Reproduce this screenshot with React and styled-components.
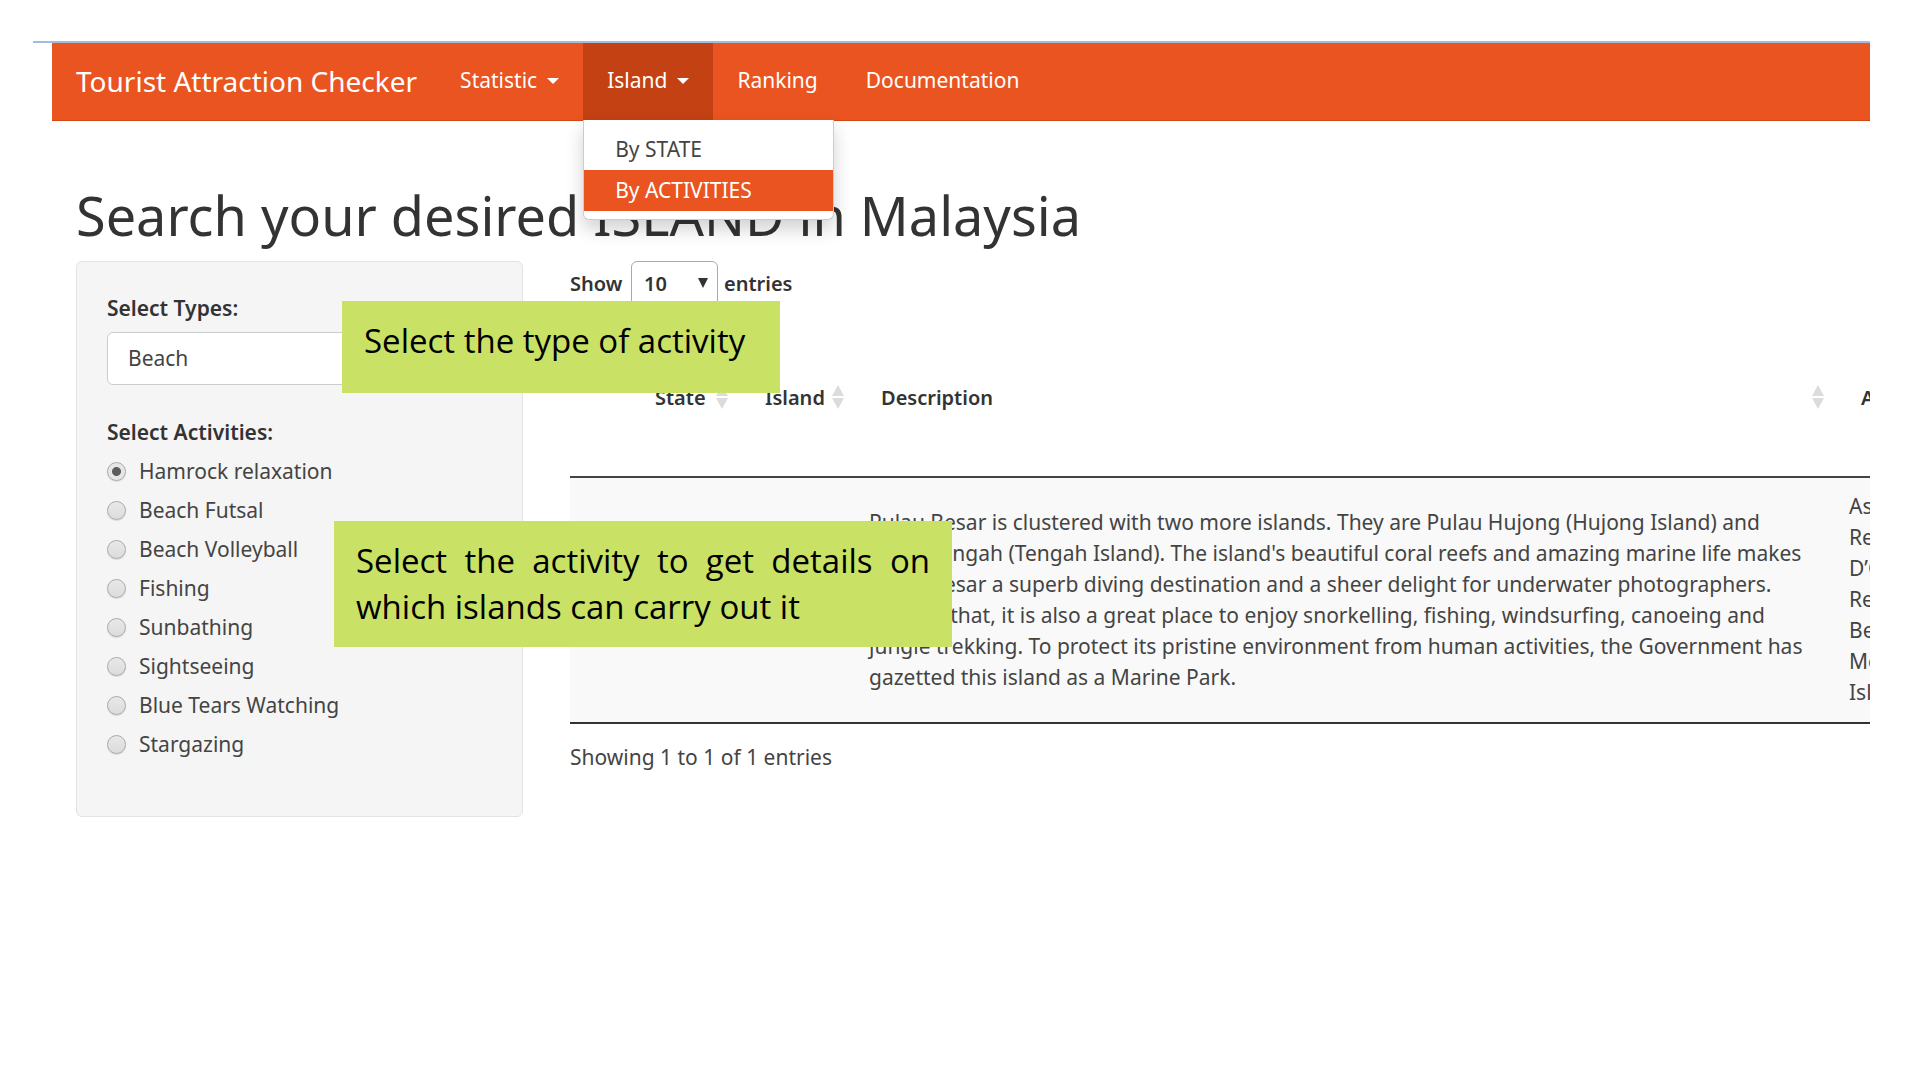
import React, { useState } from "react";
import styled, { createGlobalStyle } from "styled-components";

const GlobalStyle = createGlobalStyle`
  *, *::before, *::after { box-sizing: border-box; }
  body {
    margin: 0;
    background: #fff;
    color: #444;
    font-family: "Noto Sans", "Open Sans", sans-serif;
    font-size: 21px;
    line-height: 31px;
  }
  button, select, input { font: inherit; color: inherit; }
`;

const Page = styled.div`
  margin: 41px 50px 0 33px;
  border-top: 2px solid #a3bbe2;
`;

const Frame = styled.div`
  position: relative;
  padding-left: 19px;
`;

const Navbar = styled.nav`
  display: flex;
  align-items: stretch;
  height: 78px;
  padding-left: 24px;
  background: #e95420;
  border-bottom: 1px solid #d34615;
  color: #fff;
`;

const Brand = styled.a`
  display: flex;
  align-items: center;
  margin-right: 19px;
  color: inherit;
  font-size: 28px;
  text-decoration: none;
`;

const NavList = styled.ul`
  display: flex;
  margin: 0;
  padding: 0;
  list-style: none;
`;

const NavItem = styled.li`
  position: relative;
  display: flex;
`;

const NavLink = styled.a`
  display: flex;
  align-items: center;
  gap: 10px;
  padding: 0 24px 2px;
  background: ${(p) => (p.$open ? "#c34113" : "transparent")};
  color: inherit;
  text-decoration: none;
`;

const Caret = styled.span`
  border: 6px solid transparent;
  border-top-color: currentColor;
  border-bottom: 0;
`;

const Menu = styled.ul`
  position: absolute;
  top: 100%;
  left: 0;
  z-index: 2;
  width: 251px;
  margin: 0;
  padding: 9px 0 8px;
  list-style: none;
  background: #fff;
  border: 1px solid #ccc;
  border-top: 0;
  border-radius: 0 0 6px 6px;
  box-shadow: 0 9px 18px rgba(0, 0, 0, 0.18);
`;

const MenuLink = styled.a`
  display: block;
  padding: 5px 31px;
  background: ${(p) => (p.$active ? "#e95420" : "transparent")};
  color: ${(p) => (p.$active ? "#fff" : "#444")};
  text-decoration: none;
`;

const Content = styled.main`
  padding-left: 24px;
`;

const Title = styled.h1`
  margin: 63px 0 15px;
  color: #333;
  font-size: 54px;
  font-weight: 400;
  line-height: 62px;
`;

const Columns = styled.div`
  display: grid;
  grid-template-columns: 447px minmax(0, 1fr);
  gap: 47px;
  align-items: start;
`;

const Well = styled.form`
  padding: 31px 30px 56px;
  background: #f5f5f5;
  border: 1px solid #e3e3e3;
  border-radius: 6px;
`;

const FieldLabel = styled.label`
  display: block;
  margin-bottom: 8px;
  color: #333;
  font-weight: 600;
`;

const SelectBox = styled.span`
  position: relative;
  display: ${(p) => (p.$inline ? "inline-flex" : "flex")};
  width: ${(p) => (p.$inline ? "87px" : "100%")};
`;

const Select = styled.select`
  width: 100%;
  height: ${(p) => (p.$compact ? 45 : 53)}px;
  padding: 0 ${(p) => (p.$compact ? 12 : 20)}px;
  appearance: none;
  background: #fff;
  border: 1px solid ${(p) => (p.$compact ? "#aaa" : "#ccc")};
  border-radius: 6px;
`;

const SelectArrow = styled.svg`
  position: absolute;
  top: 17px;
  right: 10px;
  width: 10px;
  height: 10px;
  fill: #333;
  pointer-events: none;
`;

const Group = styled.fieldset`
  margin: 32px 0 0;
  padding: 0;
  border: 0;
`;

const Legend = styled.legend`
  padding: 0;
  color: #333;
  font-weight: 600;
`;

const Option = styled.label`
  display: flex;
  align-items: center;
  gap: 13px;
  margin-top: 8px;
`;

const Radio = styled.input`
  width: 19px;
  height: 19px;
  margin: 0;
  appearance: none;
  border: 1px solid #aaa;
  border-radius: 50%;
  background: linear-gradient(#e8e8e8, #dcdcdc);
  box-shadow: 0 1px 1px rgba(0, 0, 0, 0.12);
  &:checked {
    background: radial-gradient(circle, #5c5c5c 0 4px, #e6e6e6 5px);
  }
`;

const LengthRow = styled.label`
  display: flex;
  align-items: center;
  gap: 6px;
  margin-bottom: 14px;
  color: #333;
  font-size: 20px;
  font-weight: 600;
  & > span:first-child { width: 55px; }
`;

const Table = styled.table`
  width: 100%;
  table-layout: fixed;
  border-collapse: separate;
  border-spacing: 0;
  border-bottom: 2px solid #333;
`;

const HeadCell = styled.th`
  height: 158px;
  padding: 0 9px 2px 28px;
  border-bottom: 2px solid #444;
  overflow: hidden;
`;

const SortButton = styled.button`
  display: flex;
  align-items: center;
  justify-content: space-between;
  width: 100%;
  padding: 0;
  background: none;
  border: 0;
  color: #333;
  font-size: 20px;
  font-weight: 600;
`;

const SortIcon = styled.svg`
  flex: none;
  width: 12px;
  height: 24px;
  fill: #dcdcdc;
`;

const Cell = styled.td`
  padding: 13px 0 14px 16px;
  background: #f9f9f9;
  overflow: hidden;
  white-space: nowrap;
`;

const Info = styled.p`
  margin: 18px 0 0;
`;

const Callout = styled.p`
  position: absolute;
  z-index: 3;
  left: ${(p) => p.$left}px;
  top: ${(p) => p.$top}px;
  width: ${(p) => p.$width}px;
  min-height: 92px;
  margin: 0;
  padding: 17px 22px;
  background: #c9e265;
  color: #000;
  font-family: "Open Sans", "Noto Sans", sans-serif;
  font-size: 33px;
  line-height: 46px;
  text-align: justify;
`;

const activities = [
  "Hamrock relaxation",
  "Beach Futsal",
  "Beach Volleyball",
  "Fishing",
  "Sunbathing",
  "Sightseeing",
  "Blue Tears Watching",
  "Stargazing",
];

const description = [
  "Pulau Besar is clustered with two more islands. They are Pulau Hujong (Hujong Island) and",
  "Pulau Tengah (Tengah Island). The island's beautiful coral reefs and amazing marine life makes",
  "Pulau Besar a superb diving destination and a sheer delight for underwater photographers.",
  "Besides that, it is also a great place to enjoy snorkelling, fishing, windsurfing, canoeing and",
  "jungle trekking. To protect its pristine environment from human activities, the Government has",
  "gazetted this island as a Marine Park.",
];

const accommodation = ["As", "Re", "D’C", "Re", "Be", "Me", "Isl"];

const Lines = ({ items }) =>
  items.map((line, i) => (
    <React.Fragment key={i}>
      {i > 0 && <br />}
      {line}
    </React.Fragment>
  ));

const Arrow = () => (
  <SelectArrow viewBox="0 0 10 10" aria-hidden="true">
    <path d="M0 0h10L5 10z" />
  </SelectArrow>
);

const SortHeader = ({ children, icon = true }) => (
  <HeadCell scope="col">
    <SortButton type="button">
      {children}
      {icon && (
        <SortIcon viewBox="0 0 12 24" aria-hidden="true">
          <path d="M6 0l6 11H0zM6 24l6-11H0z" />
        </SortIcon>
      )}
    </SortButton>
  </HeadCell>
);

export default function App() {
  const [activity, setActivity] = useState(activities[0]);
  return (
    <>
      <GlobalStyle />
      <Page>
        <Frame>
          <Navbar>
            <Brand href="#">Tourist Attraction Checker</Brand>
            <NavList>
              <NavItem>
                <NavLink href="#">Statistic <Caret /></NavLink>
              </NavItem>
              <NavItem>
                <NavLink href="#" $open>Island <Caret /></NavLink>
                <Menu>
                  <li><MenuLink href="#">By STATE</MenuLink></li>
                  <li><MenuLink href="#" $active>By ACTIVITIES</MenuLink></li>
                </Menu>
              </NavItem>
              <NavItem><NavLink href="#">Ranking</NavLink></NavItem>
              <NavItem><NavLink href="#">Documentation</NavLink></NavItem>
            </NavList>
          </Navbar>
          <Content>
            <Title>Search your desired ISLAND in Malaysia</Title>
            <Columns>
              <Well>
                <FieldLabel htmlFor="types">Select Types:</FieldLabel>
                <SelectBox>
                  <Select id="types"><option>Beach</option></Select>
                </SelectBox>
                <Group>
                  <Legend>Select Activities:</Legend>
                  {activities.map((name) => (
                    <Option key={name}>
                      <Radio
                        type="radio"
                        name="activity"
                        checked={activity === name}
                        onChange={() => setActivity(name)}
                      />
                      {name}
                    </Option>
                  ))}
                </Group>
              </Well>
              <section>
                <LengthRow>
                  <span>Show</span>
                  <SelectBox $inline>
                    <Select $compact><option>10</option></Select>
                    <Arrow />
                  </SelectBox>
                  <span>entries</span>
                </LengthRow>
                <Table>
                  <colgroup>
                    <col width="57" />
                    <col width="110" />
                    <col width="116" />
                    <col />
                    <col width="37" />
                  </colgroup>
                  <thead>
                    <tr>
                      <HeadCell />
                      <SortHeader>State</SortHeader>
                      <SortHeader>Island</SortHeader>
                      <SortHeader>Description</SortHeader>
                      <SortHeader icon={false}>A</SortHeader>
                    </tr>
                  </thead>
                  <tbody>
                    <tr>
                      <Cell />
                      <Cell />
                      <Cell />
                      <Cell><Lines items={description} /></Cell>
                      <Cell><Lines items={accommodation} /></Cell>
                    </tr>
                  </tbody>
                </Table>
                <Info>Showing 1 to 1 of 1 entries</Info>
              </section>
            </Columns>
          </Content>
          <Callout $left={309} $top={258} $width={438}>Select the type of activity</Callout>
          <Callout $left={301} $top={478} $width={618}>
            Select the activity to get details on which islands can carry out it
          </Callout>
        </Frame>
      </Page>
    </>
  );
}
